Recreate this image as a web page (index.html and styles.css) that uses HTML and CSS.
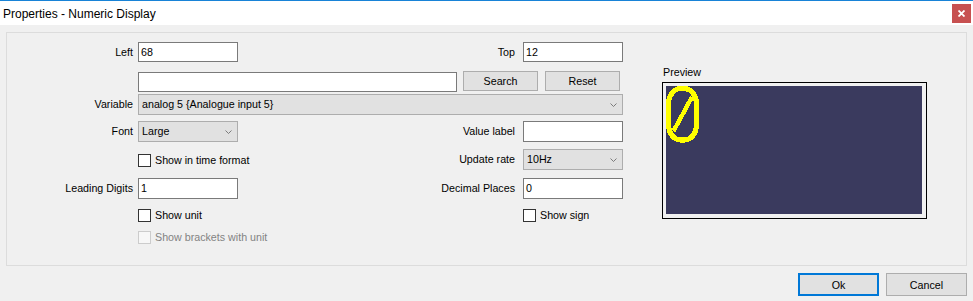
FILE: index.html
```html
<!DOCTYPE html>
<html lang="en">
<head>
    <meta charset="UTF-8">
    <title>Properties - Numeric Display</title>
    <link rel="stylesheet" href="styles.css">
</head>
<body>
    <div class="titlebar">
        <span class="title">Properties - Numeric Display</span>
        <button class="close">
            <svg width="7" height="7" viewBox="0 0 7 7"><path d="M0.5 0.5L6.5 6.5M6.5 0.5L0.5 6.5" stroke="#fff" stroke-width="1.8"/></svg>
        </button>
    </div>

    <div class="panel">
        <div class="form">
            <label class="lbl">Left</label>
            <div class="field">68</div>
            <label class="lbl lbl-right">Top</label>
            <div class="field">12</div>

            <div class="search-row">
                <div class="field search-field"></div>
                <button class="btn small">Search</button>
                <button class="btn small">Reset</button>
            </div>

            <label class="lbl">Variable</label>
            <div class="combo wide">analog 5 {Analogue input 5}
                <svg class="chev" width="7" height="4" viewBox="0 0 7 4"><path d="M0.5 0.5L3.5 3.5L6.5 0.5" fill="none" stroke="#707070" stroke-width="0.9"/></svg>
            </div>

            <label class="lbl">Font</label>
            <div class="combo">Large
                <svg class="chev" width="7" height="4" viewBox="0 0 7 4"><path d="M0.5 0.5L3.5 3.5L6.5 0.5" fill="none" stroke="#707070" stroke-width="0.9"/></svg>
            </div>
            <label class="lbl lbl-right">Value label</label>
            <div class="field tall"></div>

            <div class="check check-time"><span class="box"></span>Show in time format</div>
            <label class="lbl lbl-right">Update rate</label>
            <div class="combo">10Hz
                <svg class="chev" width="7" height="4" viewBox="0 0 7 4"><path d="M0.5 0.5L3.5 3.5L6.5 0.5" fill="none" stroke="#707070" stroke-width="0.9"/></svg>
            </div>

            <label class="lbl">Leading Digits</label>
            <div class="field tall">1</div>
            <label class="lbl lbl-right">Decimal Places</label>
            <div class="field tall">0</div>

            <div class="check check-unit"><span class="box"></span>Show unit</div>
            <div class="check check-sign"><span class="box"></span>Show sign</div>

            <div class="check check-brackets disabled"><span class="box"></span>Show brackets with unit</div>
        </div>

        <div class="preview">
            <div class="preview-label">Preview</div>
            <div class="preview-box">
                <div class="screen">
                    <svg class="digit" width="33" height="57" viewBox="0 0 33 57" shape-rendering="crispEdges">
                        <rect x="2.6" y="2.6" width="27.8" height="51.4" rx="12" ry="15" fill="none" stroke="#ffff00" stroke-width="5.2"/>
                        <path d="M7.5 45L26 11" stroke="#ffff00" stroke-width="4.4"/>
                    </svg>
                </div>
            </div>
        </div>
    </div>

    <div class="footer">
        <button class="btn primary">Ok</button>
        <button class="btn">Cancel</button>
    </div>
</body>
</html>
```

FILE: styles.css
```css
* {
    margin: 0;
    padding: 0;
    box-sizing: border-box;
}

body {
    width: 973px;
    height: 301px;
    background-color: #f0f0f0;
    font-family: "Liberation Sans", Arial, sans-serif;
    font-size: 10.7px;
    color: #000;
    overflow: hidden;
}

.titlebar {
    height: 25px;
    background-color: #fff;
    border-top: 1px solid #1883d7;
    display: flex;
    align-items: center;
    justify-content: space-between;
    padding-left: 3px;
    padding-right: 2px;
}

.title {
    font-size: 12px;
    margin-top: 1px;
}

.close {
    width: 19px;
    height: 19px;
    border: none;
    background-color: #c75050;
    display: flex;
    align-items: center;
    justify-content: center;
    margin-top: 1px;
}

.panel {
    margin: 7px 6px 0;
    height: 234px;
    border: 1px solid #dcdcdc;
    display: flex;
}

.form {
    display: grid;
    grid-template-columns: 131px 100px 285px 100px;
    grid-template-rows: 29px 23px 27px 28px 29px 28px 22px 17px;
    padding-top: 9px;
    align-items: start;
}

.lbl {
    grid-column: 1;
    text-align: right;
    padding-right: 5px;
    line-height: 21px;
    white-space: nowrap;
}

.lbl-right {
    grid-column: 3;
    padding-right: 8px;
}

.field {
    height: 20px;
    background-color: #fff;
    border: 1px solid #7a7a7a;
    padding-left: 2px;
    line-height: 18px;
}

.field.tall {
    height: 21px;
    line-height: 19px;
}

.search-row {
    grid-column: 2 / 5;
    display: flex;
    align-items: flex-start;
}

.search-field {
    width: 319px;
    margin-top: 1px;
}

.btn {
    font-family: "Liberation Sans", Arial, sans-serif;
    font-size: 10.7px;
    color: #000;
    background-color: #e1e1e1;
    border: 1px solid #adadad;
    width: 81px;
    height: 23px;
}

.btn.small {
    width: 75px;
    height: 20px;
    margin-left: 6px;
}

.btn.small + .btn.small {
    margin-left: 7px;
}

.combo {
    position: relative;
    height: 21px;
    background-color: #e1e1e1;
    border: 1px solid #adadad;
    padding-left: 3px;
    line-height: 19px;
}

.combo.wide {
    grid-column: 2 / 5;
}

.chev {
    position: absolute;
    right: 5px;
    top: 8px;
}

.check {
    display: flex;
    align-items: center;
    white-space: nowrap;
    line-height: 13px;
}

.box {
    width: 13px;
    height: 13px;
    border: 1px solid #333;
    background-color: #fff;
    margin-right: 4px;
    flex-shrink: 0;
}

.check-time {
    grid-column: 2;
    margin-top: 5px;
}

.check-unit {
    grid-column: 2;
    margin-top: 3px;
}

.check-sign {
    grid-column: 4;
    margin-top: 3px;
}

.check-brackets {
    grid-column: 2;
    margin-top: 3px;
}

.disabled {
    color: #838383;
}

.disabled .box {
    border-color: #cccccc;
    background-color: #f7f7f7;
}

.preview {
    margin-left: 39px;
    padding-top: 33px;
}

.preview-label {
    line-height: 13px;
    margin-bottom: 3px;
    padding-left: 1px;
}

.preview-box {
    width: 265px;
    height: 137px;
    border: 1px solid #000;
    padding: 3px 4px 4px 3px;
}

.screen {
    width: 256px;
    height: 128px;
    background-color: #3a3a5e;
}

.digit {
    display: block;
}

.footer {
    display: flex;
    justify-content: flex-end;
    gap: 7px;
    margin-top: 7px;
    padding-right: 6px;
}

.btn.primary {
    border: 2px solid #0078d7;
}
```
